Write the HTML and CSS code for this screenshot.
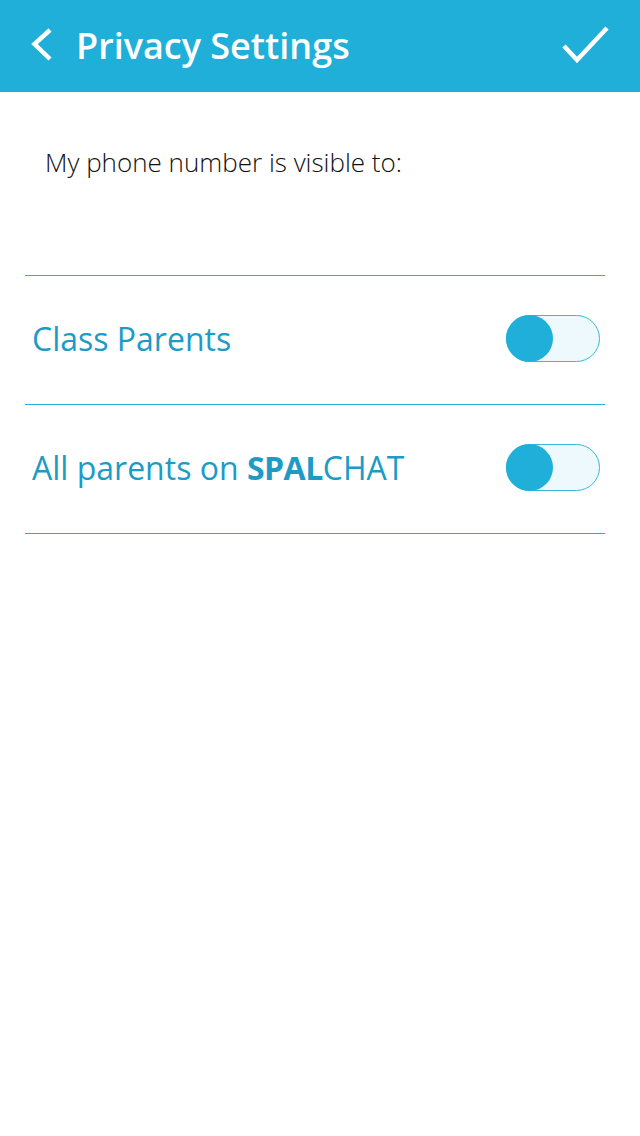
FILE: index.html
```html
<!DOCTYPE html>
<html>
<head>
<meta charset="utf-8">
<link rel="stylesheet" href="styles.css">
</head>
<body>
<header class="topbar">
  <div class="back">
    <svg width="22" height="34" viewBox="0 0 22 34"><path d="M19 2 L3.5 16 L19 31" fill="none" stroke="#fff" stroke-width="4.5"/></svg>
  </div>
  <h1 class="title">Privacy Settings</h1>
  <div class="done">
    <svg width="50" height="40" viewBox="0 0 50 40"><path d="M3 21 L16 35 L46 3" fill="none" stroke="#fff" stroke-width="4.5"/></svg>
  </div>
</header>
<main class="content">
  <p class="intro">My phone number is visible to:</p>
  <div class="list">
    <div class="row">
      <span class="label">Class Parents</span>
      <span class="toggle"><span class="knob"></span></span>
    </div>
    <div class="row">
      <span class="label">All parents on <b>SPAL</b>CHAT</span>
      <span class="toggle"><span class="knob"></span></span>
    </div>
  </div>
</main>
</body>
</html>
```
FILE: styles.css
```css
html, body {
  margin: 0;
  padding: 0;
  background: #fff;
  font-family: "Open Sans", "DejaVu Sans", sans-serif;
}
.topbar {
  height: 92px;
  background: #1fafd9;
  display: flex;
  align-items: center;
  padding: 0 29px 0 31px;
  box-sizing: border-box;
}
.back {
  width: 22px;
  height: 34px;
  margin: 0 23px 3px 0;
  display: flex;
}
.title {
  flex: 1;
  margin: 0;
  color: #fff;
  font-size: 36px;
  font-weight: 600;
  line-height: 88px;
}
.done {
  display: flex;
  width: 50px;
  height: 40px;
  margin-bottom: 2px;
}
.content {
  padding: 0 35px 0 25px;
}
.intro {
  margin: 0;
  padding: 52px 0 0 20px;
  height: 183px;
  box-sizing: border-box;
  font-size: 26px;
  font-weight: 300;
  color: #111;
  line-height: 36px;
}
.list {
  border-top: 1px solid #1fafd9;
}
.row {
  height: 128px;
  border-bottom: 1px solid #1fafd9;
  display: flex;
  align-items: center;
  justify-content: space-between;
  padding: 0 5px 0 7px;
}
.label {
  font-size: 32px;
  color: #1b9bc6;
  line-height: 40px;
  padding-bottom: 2px;
}
.label b {
  font-weight: 700;
  letter-spacing: -0.5px;
}
.toggle {
  width: 94px;
  height: 47px;
  box-sizing: border-box;
  border: 1px solid #3bb7dd;
  border-radius: 24px;
  background: #eef9fd;
  position: relative;
  margin-bottom: 4px;
}
.knob {
  position: absolute;
  left: -1px;
  top: -1px;
  width: 47px;
  height: 47px;
  border-radius: 50%;
  background: #1fafd9;
}
```
